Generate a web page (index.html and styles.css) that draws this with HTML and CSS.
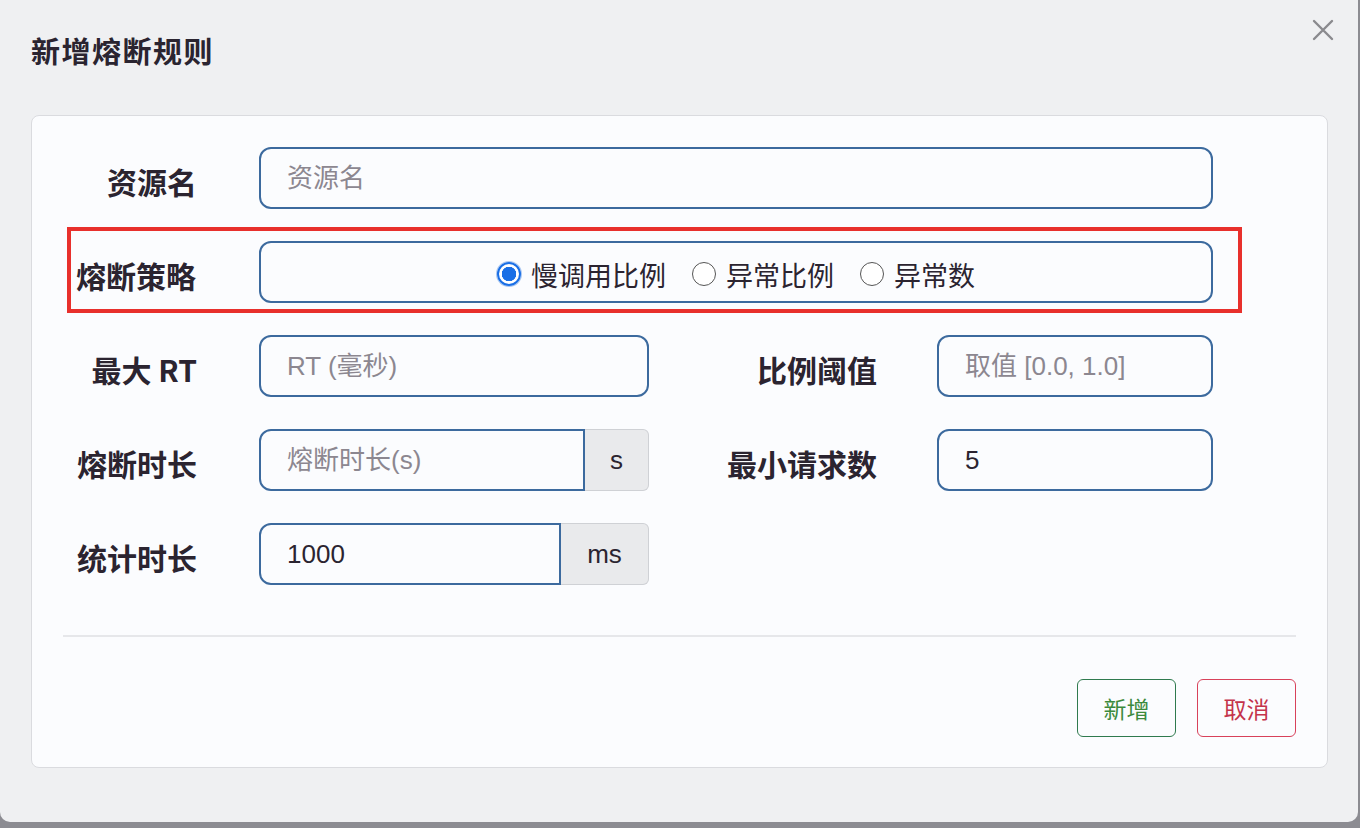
FILE: index.html
```html
<!DOCTYPE html>
<html lang="zh-CN">
<head>
    <meta charset="UTF-8">
    <title>新增熔断规则</title>
    <link rel="stylesheet" href="styles.css">
</head>
<body>

    <div class="modal">
        <div class="modal-header">
            <h3 class="modal-title">新增熔断规则</h3>
            <button class="close" aria-label="关闭">
                <svg width="22" height="22" viewBox="0 0 22 22"><path d="M2 2L20 20M20 2L2 20" stroke="#8a8a8e" stroke-width="2.4" stroke-linecap="round"/></svg>
            </button>
        </div>

        <div class="panel">
            <form class="rule-form">
                <!-- 资源名 -->
                <label class="lbl">资源名</label>
                <input class="field span3" type="text" placeholder="资源名">

                <!-- 熔断策略 -->
                <div class="strategy-row">
                    <label class="lbl">熔断策略</label>
                    <div class="field radios span3">
                        <label class="radio"><span class="dot checked"></span>慢调用比例</label>
                        <label class="radio"><span class="dot"></span>异常比例</label>
                        <label class="radio"><span class="dot"></span>异常数</label>
                    </div>
                </div>

                <label class="lbl">最大 RT</label>
                <input class="field" type="text" placeholder="RT (毫秒)">
                <label class="lbl lbl-right">比例阈值</label>
                <input class="field" type="text" placeholder="取值 [0.0, 1.0]">

                <label class="lbl">熔断时长</label>
                <div class="group">
                    <input class="field" type="text" placeholder="熔断时长(s)">
                    <span class="addon">s</span>
                </div>
                <label class="lbl lbl-right">最小请求数</label>
                <input class="field" type="text" value="5">

                <label class="lbl">统计时长</label>
                <div class="group">
                    <input class="field" type="text" value="1000">
                    <span class="addon addon-wide">ms</span>
                </div>
            </form>

            <div class="panel-footer">
                <button class="btn btn-ok">新增</button>
                <button class="btn btn-cancel">取消</button>
            </div>
        </div>
    </div>

</body>
</html>
```

FILE: styles.css
```css
body {
    margin: 0;
    padding: 0;
    width: 1360px;
    height: 828px;
    background-color: #8c8c92;
    font-family: "Noto Sans CJK SC", "Liberation Sans", sans-serif;
    color: #2b2430;
    overflow: hidden;
}

.modal {
    width: 1358px;
    height: 822px;
    background-color: #eff0f2;
    border-radius: 0 0 10px 10px;
    box-sizing: border-box;
    padding: 0 30px 0 31px;
}

.modal-header {
    height: 115px;
    display: flex;
    align-items: flex-start;
    justify-content: space-between;
}

.modal-title {
    margin: 30px 0 0 0;
    font-size: 29px;
    line-height: 40px;
    font-weight: 700;
    letter-spacing: 1.5px;
    color: #2a2430;
}

.close {
    border: none;
    background: none;
    padding: 0;
    margin: 19px -6px 0 0;
    width: 22px;
    height: 22px;
    cursor: pointer;
}

/* Panel */
.panel {
    background-color: #fbfcfe;
    border: 1px solid #dadbdf;
    border-radius: 8px;
    padding: 31px 31px 30px 31px;
}

.rule-form {
    display: grid;
    grid-template-columns: 196px 390px 288px 276px;
    grid-auto-rows: 62px;
    row-gap: 32px;
    align-items: center;
}

.lbl {
    font-size: 30px;
    font-weight: 700;
    text-align: right;
    padding-right: 62px;
    padding-top: 6px;
    color: #2b2430;
    white-space: nowrap;
}

.lbl-right {
    padding-right: 60px;
}

.span3 {
    grid-column: 2 / 5;
}

.field {
    box-sizing: border-box;
    height: 62px;
    width: 100%;
    border: 2px solid #3c6a9e;
    border-radius: 12px;
    background-color: #fbfcfe;
    padding: 0 26px;
    font-family: "Liberation Sans", "Noto Sans CJK SC", sans-serif;
    font-size: 26px;
    color: #2b2430;
    outline: none;
}

.field::placeholder {
    color: #8c8790;
}

/* red annotation around strategy row */
.strategy-row {
    grid-column: 1 / 5;
    display: grid;
    grid-template-columns: 196px 954px;
    align-items: center;
    height: 62px;
    position: relative;
}

.strategy-row .lbl {
    text-align: left;
    padding: 6px 0 0 13px;
}

.strategy-row::after {
    content: "";
    position: absolute;
    top: -14px;
    bottom: -10px;
    left: 4px;
    right: -29px;
    border: 4px solid #e8302c;
    pointer-events: none;
}

.radios {
    display: flex;
    align-items: center;
    justify-content: center;
    gap: 26px;
    padding: 4px 0 0 0;
    font-family: "Noto Sans CJK SC", sans-serif;
}

.radio {
    display: flex;
    align-items: center;
    gap: 10px;
    font-size: 27px;
    color: #2b2430;
}

.dot {
    width: 24px;
    height: 24px;
    border: 1.5px solid #555;
    border-radius: 50%;
    box-sizing: border-box;
    background: #fff;
}

.dot.checked {
    border: 2.5px solid #1a6fe6;
    background: radial-gradient(circle, #1a6fe6 0 7px, #fff 7.5px);
    box-shadow: 0 0 0 1px #a9c6f0;
}

/* input groups */
.group {
    display: flex;
    height: 62px;
}

.group .field {
    flex: 1;
    border-radius: 12px 0 0 12px;
}

.addon {
    width: 64px;
    box-sizing: border-box;
    display: flex;
    align-items: center;
    justify-content: center;
    background-color: #e9eaec;
    border: 1px solid #cfd1d5;
    border-left: none;
    border-radius: 0 6px 6px 0;
    font-family: "Liberation Sans", sans-serif;
    font-size: 26px;
    color: #2b2430;
}

.addon-wide {
    width: 88px;
}

/* footer */
.panel-footer {
    margin-top: 50px;
    border-top: 2px solid #e6e7ea;
    padding-top: 42px;
    display: flex;
    justify-content: flex-end;
    gap: 21px;
}

.btn {
    width: 99px;
    height: 58px;
    background: #fbfcfe;
    border-radius: 6px;
    font-family: "Noto Sans CJK SC", sans-serif;
    font-size: 23px;
    cursor: pointer;
}

.btn-ok {
    border: 1.5px solid #2f7a4e;
    color: #3c8a3c;
}

.btn-cancel {
    border: 1.5px solid #d8415a;
    color: #c4334b;
}
```
